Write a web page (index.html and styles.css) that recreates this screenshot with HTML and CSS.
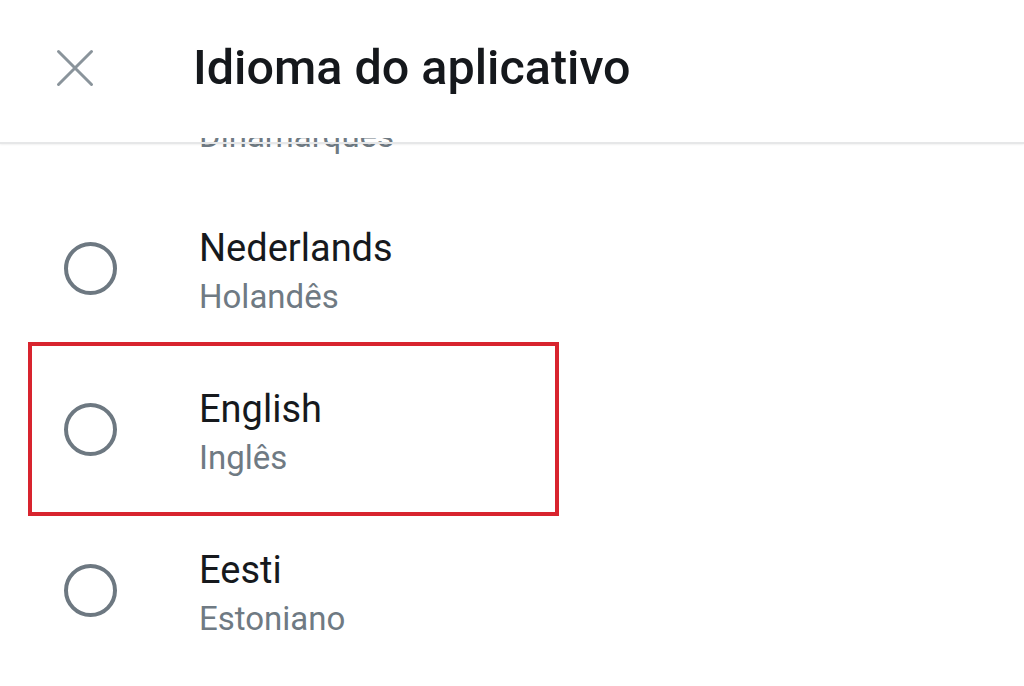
FILE: index.html
```html
<!DOCTYPE html>
<html lang="pt">
<head>
  <meta charset="UTF-8" />
  <meta name="viewport" content="width=device-width, initial-scale=1.0"/>
  <title>Idioma do aplicativo</title>
  <link rel="stylesheet" href="styles.css">
</head>
<body>
  <header class="topbar">
    <button class="close-btn" aria-label="Fechar">
      <svg viewBox="0 0 48 48" width="48" height="48">
        <path d="M7.5 7.5 L40.5 40.5 M40.5 7.5 L7.5 40.5" stroke="#8a949b" stroke-width="3" stroke-linecap="round" fill="none"/>
      </svg>
    </button>
    <h1 class="title">Idioma do aplicativo</h1>
  </header>

  <ul class="lang-list">
    <!-- linha parcialmente escondida atrás do cabeçalho -->
    <li class="lang-row">
      <span class="radio"></span>
      <div class="lang-text">
        <div class="lang-name"></div>
        <div class="lang-sub">Dinamarquês</div>
      </div>
    </li>
    <li class="lang-row">
      <span class="radio"></span>
      <div class="lang-text">
        <div class="lang-name">Nederlands</div>
        <div class="lang-sub">Holandês</div>
      </div>
    </li>
    <li class="lang-row marked">
      <span class="radio"></span>
      <div class="lang-text">
        <div class="lang-name">English</div>
        <div class="lang-sub">Inglês</div>
      </div>
      <span class="highlight"></span>
    </li>
    <li class="lang-row">
      <span class="radio"></span>
      <div class="lang-text">
        <div class="lang-name">Eesti</div>
        <div class="lang-sub">Estoniano</div>
      </div>
    </li>
  </ul>
</body>
</html>
```

FILE: styles.css
```css
body {
  margin: 0;
  height: 686px;
  overflow: hidden;
  background: #fff;
  font-family: Roboto, "Noto Sans", sans-serif;
  color: #16191d;
}

.topbar {
  position: relative;
  z-index: 2;
  height: 136px;
  padding-bottom: 2px;
  background: #fff;
  display: flex;
  align-items: center;
}

.topbar::after {
  content: "";
  position: absolute;
  left: 0;
  right: 0;
  bottom: -6px;
  height: 2px;
  background: #e6e7e8;
  box-shadow: 0 1px 2px rgba(0, 0, 0, 0.06);
}

.close-btn {
  margin-left: 51px;
  width: 48px;
  height: 48px;
  padding: 0;
  border: none;
  background: none;
  display: flex;
}

.title {
  margin: 0 0 0 94px;
  font-size: 48.5px;
  line-height: 56px;
  font-weight: 500;
  color: #15181c;
}

.lang-list {
  list-style: none;
  margin: -111px 0 0 0;
  padding: 0;
}

.lang-row {
  position: relative;
  height: 161px;
  display: flex;
  align-items: center;
}

.radio {
  margin-left: 64px;
  width: 45px;
  height: 45px;
  border: 4px solid #6d7881;
  border-radius: 50%;
  flex-shrink: 0;
}

.lang-text {
  margin-left: 82px;
  margin-top: 10px;
}

.lang-name {
  font-size: 38px;
  line-height: 44px;
  color: #16191d;
}

.lang-name:empty {
  height: 44px;
}

.lang-sub {
  margin-top: 2px;
  font-size: 33px;
  line-height: 50px;
  color: #6f7a83;
}

.highlight {
  position: absolute;
  top: -7px;
  left: 28px;
  width: 523px;
  height: 166px;
  border: 4px solid #d8242e;
}
```
